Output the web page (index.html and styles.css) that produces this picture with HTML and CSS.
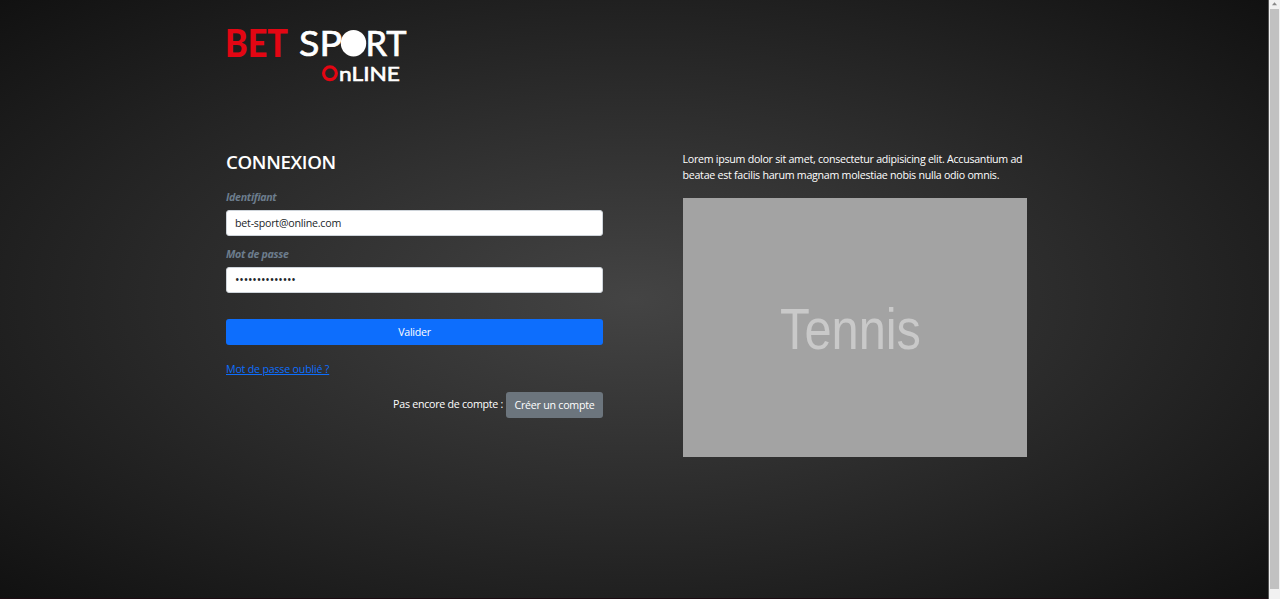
FILE: index.html
```html
<!DOCTYPE html>
<html lang="fr">
<head>
<meta charset="utf-8">
<title>Bet Sport Online</title>
<link rel="stylesheet" href="styles.css">
</head>
<body>
<div class="window">
  <main class="page">
    <header class="brand">
      <svg class="logo" width="182" height="56" viewBox="0 0 182 56" role="img" aria-label="Bet Sport Online">
        <text class="logo-bet" x="-1" y="28.5" textLength="63" lengthAdjust="spacingAndGlyphs">BET</text>
        <text class="logo-sport" x="73" y="28" textLength="43" lengthAdjust="spacingAndGlyphs">SP</text>
        <ellipse class="ball" cx="127.5" cy="15.2" rx="12.7" ry="13.3"/>
        <text class="logo-sport" x="139.5" y="28" textLength="41" lengthAdjust="spacingAndGlyphs">RT</text>
        <circle class="ring" cx="104" cy="45.3" r="6.4"/>
        <text class="logo-online" x="113" y="53" textLength="61" lengthAdjust="spacingAndGlyphs">nLINE</text>
      </svg>
    </header>
    <div class="columns">
      <form class="login">
        <h1 class="title">CONNEXION</h1>
        <label class="label" for="login">Identifiant</label>
        <input class="field" id="login" type="text" value="bet-sport@online.com">
        <label class="label" for="password">Mot de passe</label>
        <div class="field password" id="password">••••••••••••••</div>
        <button class="button submit" type="button">Valider</button>
        <a class="forgot" href="#">Mot de passe oublié ?</a>
        <div class="signup"><span class="signup-text">Pas encore de compte :</span><button class="button create" type="button">Créer un compte</button></div>
      </form>
      <section class="promo">
        <p class="intro"><span class="line">Lorem ipsum dolor sit amet, consectetur adipisicing elit. Accusantium ad</span> <span class="line">beatae est facilis harum magnam molestiae nobis nulla odio omnis.</span></p>
        <svg class="tennis" width="344" height="259" viewBox="0 0 344 259">
          <text x="97" y="151" textLength="141" lengthAdjust="spacingAndGlyphs">Tennis</text>
        </svg>
      </section>
    </div>
  </main>
  <div class="scrollbar">
    <svg class="arrow" width="9" height="9" viewBox="0 0 9 9"><path d="M2 5.2 4.5 2.2 7 5.2z"/></svg>
    <div class="thumb"></div>
  </div>
</div>
</body>
</html>
```
FILE: styles.css
```css
* { box-sizing: border-box; }

body {
  margin: 0;
  overflow: hidden;
  font: 10.67px/16px "Open Sans", "Noto Sans", sans-serif;
  letter-spacing: -0.27px;
  color: #fff;
}

.window { display: flex; width: 1280px; height: 599px; }

.page {
  flex: 1;
  padding: 28px 0 0 226px;
  background: radial-gradient(#444, #111);
  border-bottom: 1px solid #1c0c12;
}

.brand { height: 56px; }
.logo { display: block; overflow: visible; letter-spacing: 0; }
.logo text { font-family: Lato, sans-serif; }
.logo .logo-bet { font-size: 37px; font-weight: 900; fill: #e30613; }
.logo .logo-sport { font-size: 35px; fill: #fff; stroke: #fff; stroke-width: 0.7; }
.logo .logo-online { font-size: 20px; font-weight: 400; fill: #fff; stroke: #fff; stroke-width: 0.6; }
.ball { fill: #fff; }
.ring { fill: none; stroke: #e30613; stroke-width: 3.2; }

.columns { display: flex; gap: 79.5px; padding-top: 66px; }
.login { display: flex; flex-direction: column; width: 377px; }

.title { margin: 0; font-size: 18.7px; line-height: 24px; font-weight: 600; letter-spacing: -0.35px; }

.label {
  height: 16px;
  margin-top: 15px;
  color: #6c7d8d;
  font-style: italic;
  font-weight: 700;
  letter-spacing: -0.32px;
}

.field {
  width: 377px;
  height: 26px;
  margin-top: 4.5px;
  padding: 0 8px;
  border: 1px solid #ced4da;
  border-radius: 3px;
  background: #fff;
  color: #212529;
  font: inherit;
  letter-spacing: -0.22px;
  line-height: 24px;
}

.field + .label { margin-top: 10.5px; }
.password { font-size: 12px; letter-spacing: -0.18px; }

.button {
  height: 26px;
  padding: 0;
  border: 0;
  border-radius: 3px;
  color: #fff;
  font: inherit;
  letter-spacing: -0.27px;
}

.submit { margin-top: 26.5px; background: #0d6efd; }

.forgot { align-self: flex-start; margin-top: 16px; color: #0d6efd; letter-spacing: -0.2px; }

.signup { display: flex; justify-content: flex-end; gap: 3px; margin-top: 15px; }
.signup-text { line-height: 24px; }
.create { width: 97px; background: #6c757d; letter-spacing: -0.25px; }

.promo { width: 345px; padding-top: 0.6px; }
.intro { margin: 0 0 15.6px; height: 32px; }
.line { display: block; white-space: nowrap; }

.tennis { display: block; background: #a3a3a3; letter-spacing: 0; }
.tennis text { font: 57px "Liberation Sans", sans-serif; fill: #c9c9c9; }

.scrollbar {
  width: 12px;
  background: #f1f1f1;
  border-left: 1px solid #555;
}

.arrow { display: block; margin-left: 1px; fill: #888; }
.thumb { width: 9px; height: 580px; margin-left: 1px; background: #c1c1c1; }
```
